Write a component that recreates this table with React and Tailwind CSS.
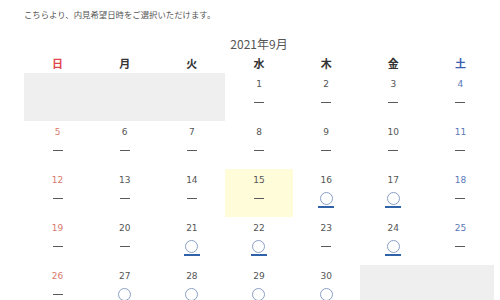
import React from "react";

const rows = [
  [{ g: 3 }, { d: 1 }, { d: 2 }, { d: 3 }, { d: 4 }],
  [{ d: 5 }, { d: 6 }, { d: 7 }, { d: 8 }, { d: 9 }, { d: 10 }, { d: 11 }],
  [{ d: 12 }, { d: 13 }, { d: 14 }, { d: 15, y: true }, { d: 16, o: true }, { d: 17, o: true }, { d: 18 }],
  [{ d: 19 }, { d: 20 }, { d: 21, o: true }, { d: 22, o: true }, { d: 23 }, { d: 24, o: true }, { d: 25 }],
  [{ d: 26 }, { d: 27, o: true }, { d: 28, o: true }, { d: 29, o: true }, { d: 30, o: true }, { g: 2 }],
];

const heads = ["日", "月", "火", "水", "木", "金", "土"];

function Cell({ c, col }) {
  if (c.g) {
    return (
      <div
        className={c.g === 3 ? "col-span-3 h-[48px] bg-[#efefef]" : "col-span-2 h-[48px] bg-[#efefef]"}
      />
    );
  }
  const numColor =
    col === 0 ? "text-[#d9786b]" : col === 6 ? "text-[#5b78b6]" : "text-[#555555]";
  return (
    <div
      className={
        "h-[48px] flex flex-col items-center " + (c.y ? "bg-[#fffcd9]" : "")
      }
    >
      <div className={"mt-[5px] h-[12px] leading-[12px] text-[9px] " + numColor}>{c.d}</div>
      {c.o ? (
        <div className="mt-[6px] flex flex-col items-center">
          <div className="w-[13px] h-[13px] rounded-full border border-[#8aa0c6]" />
          <div className="mt-[1px] w-[16px] h-[1.5px] bg-[#2f62a8]" />
        </div>
      ) : (
        <div className="mt-[12px] w-[10px] h-[1px] bg-[#5a5a5a]" />
      )}
    </div>
  );
}

export default function App() {
  return (
    <div
      className="w-[500px] h-[300px] overflow-hidden bg-white text-[#555555]"
      style={{ fontFamily: '"DejaVu Sans", "Noto Sans CJK JP", sans-serif' }}
    >
      <div className="ml-[24px] w-[470px]">
        <div
          className="h-[28px] leading-[28px] text-[8.4px] text-[#555555]"
          style={{ fontFamily: '"Noto Sans CJK JP", sans-serif' }}
        >
          こちらより、内見希望日時をご選択いただけます。
        </div>
        <div
          className="h-[25px] pt-[8px] leading-[16px] text-[12px] text-center text-[#555555]"
          style={{ fontFamily: '"Noto Sans CJK JP", sans-serif' }}
        >
          2021年9月
        </div>
        <div
          className="grid grid-cols-7 h-[20px] items-center"
          style={{ fontFamily: '"Noto Sans CJK JP", sans-serif' }}
        >
          {heads.map((h, i) => (
            <div
              key={h}
              className={
                "text-center text-[11px] font-bold leading-[20px] " +
                (i === 0 ? "text-[#e0474c]" : i === 6 ? "text-[#3a5db0]" : "text-[#333333]")
              }
            >
              {h}
            </div>
          ))}
        </div>
        {rows.map((r, ri) => {
          let col = 0;
          return (
            <div key={ri} className="grid grid-cols-7">
              {r.map((c, ci) => {
                const thisCol = col;
                col += c.g ? c.g : 1;
                return <Cell key={ci} c={c} col={thisCol} />;
              })}
            </div>
          );
        })}
      </div>
    </div>
  );
}
